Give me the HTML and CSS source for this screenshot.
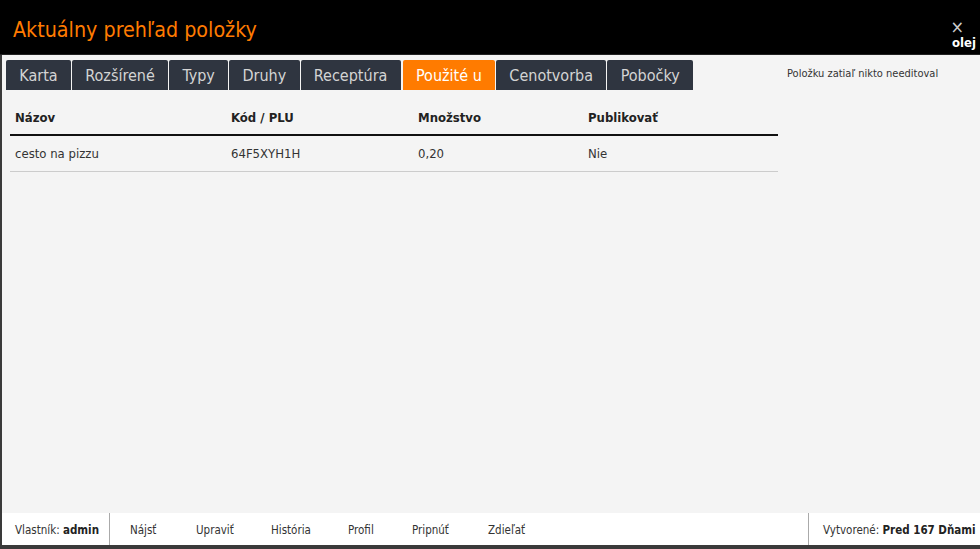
FILE: index.html
```html
<!DOCTYPE html>
<html lang="sk">
<head>
<meta charset="utf-8">
<title>Aktuálny prehľad položky</title>
<link rel="stylesheet" href="styles.css">
</head>
<body>
<div class="dialog">
  <header class="head">
    <h1 class="title">Aktuálny prehľad položky</h1>
    <div class="head-side">
      <span class="close">×</span>
      <span class="user">olej</span>
    </div>
  </header>
  <main class="content">
    <div class="main-col">
      <nav class="tabs">
        <span class="tab">Karta</span>
        <span class="tab">Rozšírené</span>
        <span class="tab">Typy</span>
        <span class="tab">Druhy</span>
        <span class="tab">Receptúra</span>
        <span class="tab active">Použité u</span>
        <span class="tab">Cenotvorba</span>
        <span class="tab">Pobočky</span>
      </nav>
      <table class="grid">
        <thead>
          <tr>
            <th class="c1">Názov</th>
            <th class="c2">Kód / PLU</th>
            <th class="c3">Množstvo</th>
            <th class="c4">Publikovať</th>
          </tr>
        </thead>
        <tbody>
          <tr>
            <td>cesto na pizzu</td>
            <td>64F5XYH1H</td>
            <td>0,20</td>
            <td>Nie</td>
          </tr>
        </tbody>
      </table>
    </div>
    <aside class="side">Položku zatiaľ nikto needitoval</aside>
  </main>
  <footer class="foot">
    <div class="owner"><span>Vlastník: <b>admin</b></span></div>
    <div class="actions">
      <span>Nájsť</span>
      <span>Upraviť</span>
      <span>História</span>
      <span>Profil</span>
      <span>Pripnúť</span>
      <span>Zdieľať</span>
    </div>
    <div class="created"><span>Vytvorené: <b>Pred 167 Dňami</b></span></div>
  </footer>
</div>
</body>
</html>
```
FILE: styles.css
```css
* { box-sizing: border-box; }

html, body {
  margin: 0;
  height: 100%;
}

body {
  font-family: "DejaVu Sans Condensed", "DejaVu Sans", sans-serif;
  color: #333;
  background: #333;
}

.dialog {
  height: 549px;
  display: flex;
  flex-direction: column;
  background: #f4f4f4;
  border-left: 2px solid #3a3a3a;
  border-bottom: 4px solid #3a3a3a;
}

.head {
  height: 55px;
  background: #000;
  display: flex;
  justify-content: space-between;
  align-items: flex-start;
  border-bottom: 1px solid #222;
  margin-left: -2px;
}

.title {
  margin: 17px 0 0 13px;
  font-size: 21.3px;
  font-weight: normal;
  color: #ff7b00;
}

.head-side {
  display: flex;
  flex-direction: column;
  align-items: flex-end;
  gap: 1px;
  padding-top: 19px;
  padding-right: 4px;
}

.close {
  color: #ccc;
  font-size: 18px;
  line-height: 16px;
  margin-right: 12px;
}

.user {
  color: #fff;
  font-weight: bold;
  font-size: 13px;
  line-height: 14px;
}

.content {
  flex: 1;
  display: flex;
  padding-top: 5px;
}

.main-col {
  width: 783px;
  padding-left: 4px;
}

.tabs {
  display: flex;
  gap: 1px;
}

.tab {
  height: 30px;
  display: flex;
  align-items: center;
  padding: 0 13.3px;
  background: #2f3540;
  color: #d4d4d4;
  font-size: 16px;
  border-radius: 2px 2px 0 0;
}

.tab.active {
  background: #ff7b00;
  color: #fff;
  margin-left: 1px;
}

.grid {
  margin: 15px 0 0 4px;
  width: 768px;
  border-collapse: collapse;
  font-size: 13px;
}

.grid th {
  text-align: left;
  font-weight: bold;
  color: #222;
  padding: 5px 5px 9px;
  border-bottom: 2px solid #111;
}

.grid td {
  padding: 10px 5px 10px;
  border-bottom: 1px solid #ccc;
  color: #333;
}

.c1 { width: 216px; }
.c2 { width: 187px; }
.c3 { width: 170px; }

.side {
  padding: 7px 0 0 2px;
  font-size: 11px;
  color: #333;
}

.foot {
  height: 32px;
  background: #fff;
  display: flex;
  align-items: stretch;
  font-size: 11.5px;
  color: #333;
  white-space: nowrap;
}

.foot b { color: #222; }

.owner {
  width: 108px;
  flex-shrink: 0;
  display: flex;
  align-items: center;
  padding: 2px 0 0 13px;
  border-right: 1px solid #aaa;
}

.actions {
  flex: 1;
  display: flex;
  align-items: center;
  padding: 2px 0 0 20px;
}

.actions span { width: 71px; flex-shrink: 0; }
.actions span:nth-child(1) { width: 66px; }
.actions span:nth-child(2) { width: 75px; }
.actions span:nth-child(3) { width: 77px; }
.actions span:nth-child(4) { width: 64px; }
.actions span:nth-child(5) { width: 76px; }

.created {
  width: 172px;
  flex-shrink: 0;
  display: flex;
  align-items: center;
  padding: 2px 0 0 14px;
  border-left: 1px solid #aaa;
}
```
